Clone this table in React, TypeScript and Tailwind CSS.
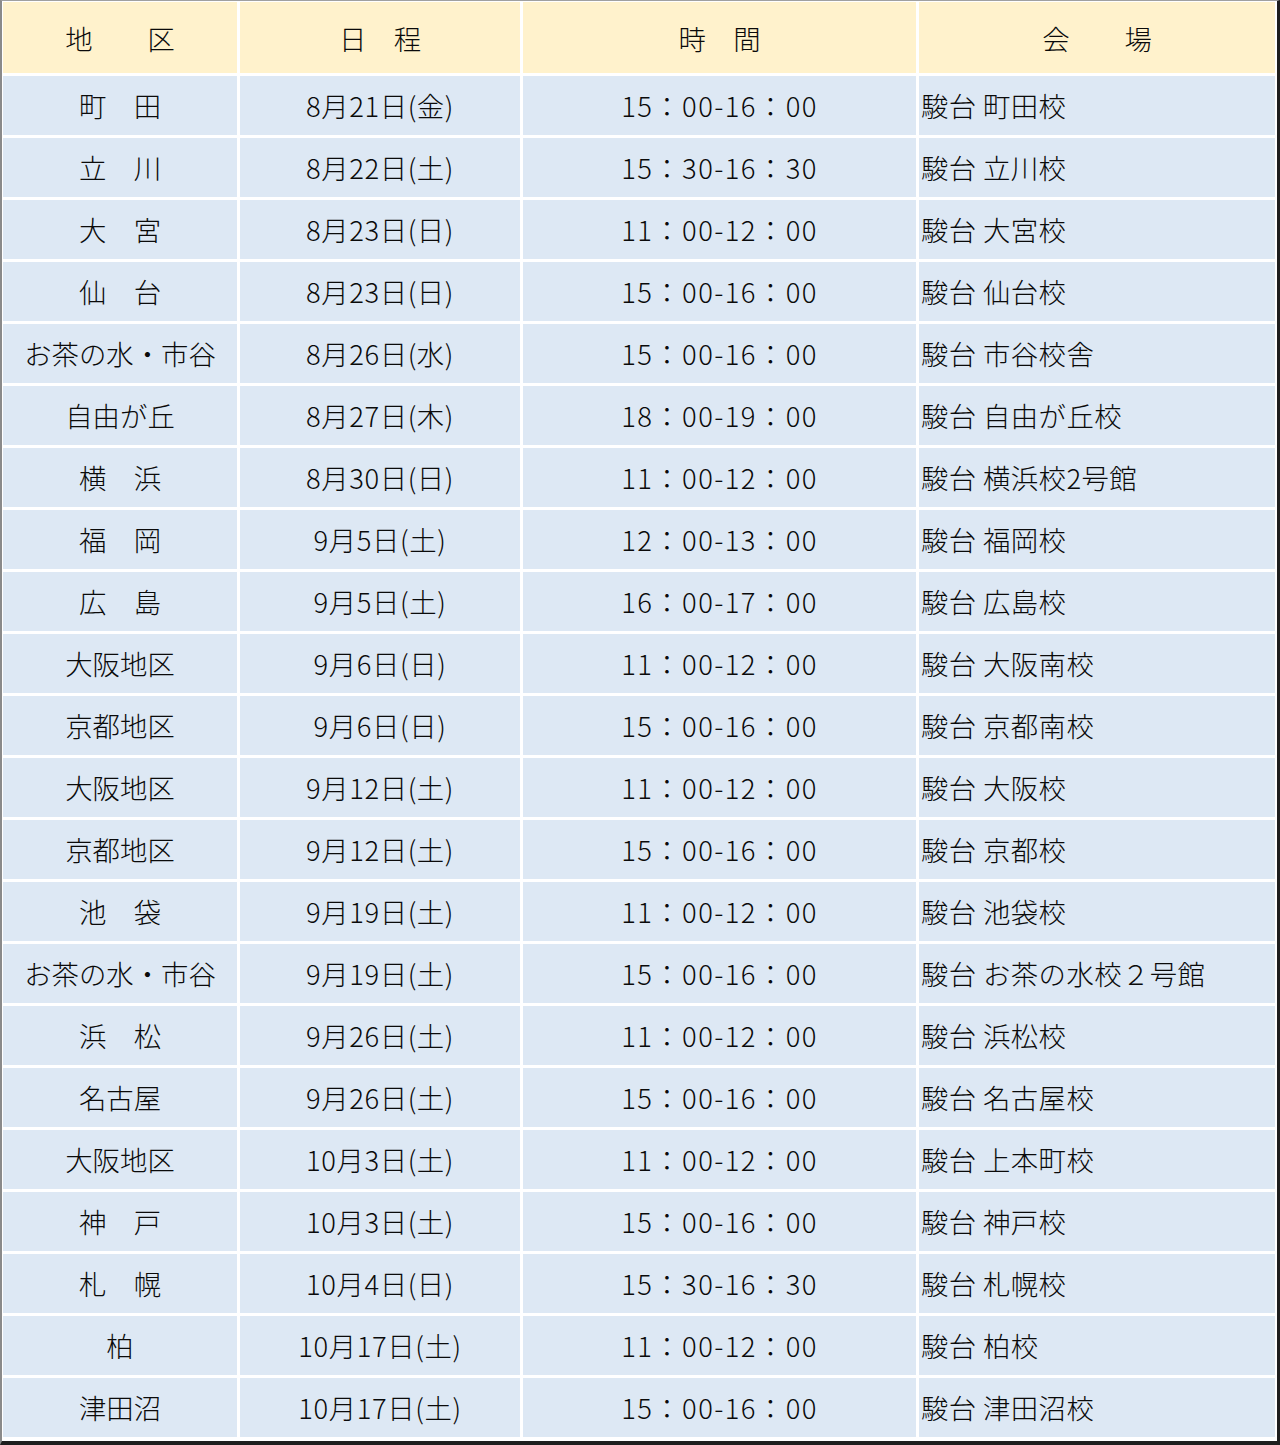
import React from "react";

const rows: [string, string, string, string][] = [
  ["町　田", "8月21日(金)", "15：00-16：00", "駿台 町田校"],
  ["立　川", "8月22日(土)", "15：30-16：30", "駿台 立川校"],
  ["大　宮", "8月23日(日)", "11：00-12：00", "駿台 大宮校"],
  ["仙　台", "8月23日(日)", "15：00-16：00", "駿台 仙台校"],
  ["お茶の水・市谷", "8月26日(水)", "15：00-16：00", "駿台 市谷校舎"],
  ["自由が丘", "8月27日(木)", "18：00-19：00", "駿台 自由が丘校"],
  ["横　浜", "8月30日(日)", "11：00-12：00", "駿台 横浜校2号館"],
  ["福　岡", "9月5日(土)", "12：00-13：00", "駿台 福岡校"],
  ["広　島", "9月5日(土)", "16：00-17：00", "駿台 広島校"],
  ["大阪地区", "9月6日(日)", "11：00-12：00", "駿台 大阪南校"],
  ["京都地区", "9月6日(日)", "15：00-16：00", "駿台 京都南校"],
  ["大阪地区", "9月12日(土)", "11：00-12：00", "駿台 大阪校"],
  ["京都地区", "9月12日(土)", "15：00-16：00", "駿台 京都校"],
  ["池　袋", "9月19日(土)", "11：00-12：00", "駿台 池袋校"],
  ["お茶の水・市谷", "9月19日(土)", "15：00-16：00", "駿台 お茶の水校２号館"],
  ["浜　松", "9月26日(土)", "11：00-12：00", "駿台 浜松校"],
  ["名古屋", "9月26日(土)", "15：00-16：00", "駿台 名古屋校"],
  ["大阪地区", "10月3日(土)", "11：00-12：00", "駿台 上本町校"],
  ["神　戸", "10月3日(土)", "15：00-16：00", "駿台 神戸校"],
  ["札　幌", "10月4日(日)", "15：30-16：30", "駿台 札幌校"],
  ["柏", "10月17日(土)", "11：00-12：00", "駿台 柏校"],
  ["津田沼", "10月17日(土)", "15：00-16：00", "駿台 津田沼校"],
];

const headers = ["地　　区", "日　程", "時　間", "会　　場"];

export default function App() {
  return (
    <div
      className="w-[1280px] bg-white text-[#0a0a0a] text-[27.4px] leading-none font-light"
      style={{ fontFamily: '"Noto Sans CJK JP", "Noto Sans", sans-serif' }}
    >
      <div className="border-l-2 border-t border-r-[3px] border-b-4 border-l-[#8a8a8a] border-t-[#a0a0a0] border-r-[#1e1e1e] border-b-[#1e1e1e] pt-px pl-px pr-[2px] pb-[4px]">
        <div className="grid grid-cols-[234px_280px_393px_1fr] gap-[3px]">
          {headers.map((h, i) => (
            <div
              key={"h" + i}
              className="h-[71px] bg-[#fff2cc] flex items-center justify-center"
            >
              <span className="pt-[2px]">{h}</span>
            </div>
          ))}
          {rows.map((r, ri) =>
            r.map((c, ci) => (
              <div
                key={ri + "-" + ci}
                className={`h-[59px] bg-[#dde8f4] flex items-center ${ci === 3 ? "justify-start pl-[2px]" : "justify-center"}`}
              >
                <span
                  className={
                    ci === 1
                      ? "tracking-[0.6px]"
                      : ci === 2
                      ? "tracking-[1.4px]"
                      : ci === 3
                      ? "tracking-[0.4px]"
                      : ""
                  }
                >
                  {c}
                </span>
              </div>
            ))
          )}
        </div>
      </div>
    </div>
  );
}
